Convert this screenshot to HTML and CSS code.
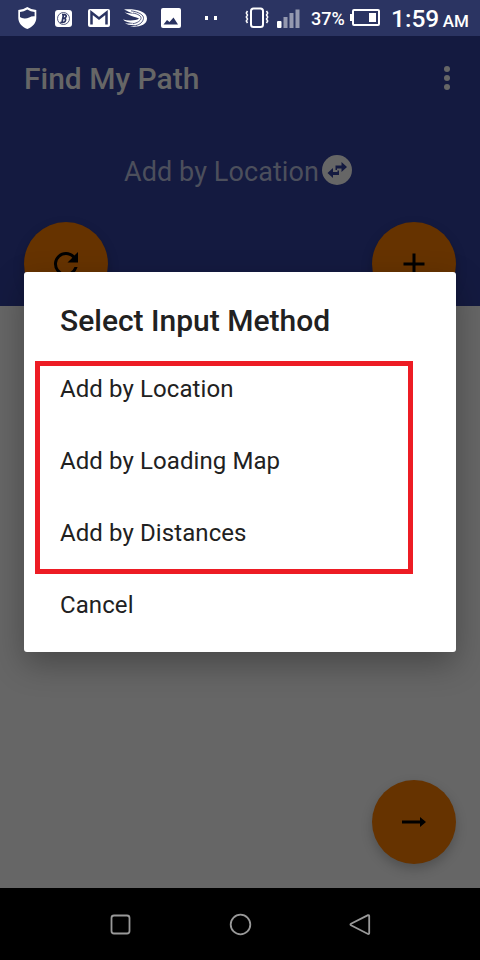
FILE: index.html
```html
<!DOCTYPE html>
<html lang="en">
<head>
<meta charset="utf-8">
<title>Find My Path</title>
<link rel="stylesheet" href="styles.css">
</head>
<body>
<div class="screen">
  <header class="status">
    <svg class="status-icons" width="240" height="36" viewBox="0 0 240 36">
      <path fill="#fff" d="M27.300 7q4 2.800 9 3v8c0 5-4 9-9 11-5-2-9-6-9-11v-8q5-.2 9-3z"/>
      <path fill="#2b3462" d="M20 12q4-.4 7.300-2.600 3.300 2.200 7.300 2.600v4.200c-4-.5-6.500 2.400-10 2.200-2 0-3.400-.7-4.600-1.400z"/>
      <rect x="55" y="10" width="17" height="17" rx="3" fill="#fff"/>
      <circle cx="63.500" cy="18.500" r="6" fill="none" stroke="#2b3462" stroke-width=".8"/>
      <path d="M62 14.700h2.500c2.700 0 2 3.500-.5 3.600 2.800 0 1.700 4.200-1.200 4.200h-2.600M63.500 14.700l-1.500 7.800M62.700 18.300h1.300" fill="none" stroke="#2b3462" stroke-width="1.700"/>
      <rect x="88" y="9" width="22" height="18" rx="2" fill="#fff"/>
      <path d="M91.500 24.500V12.500l7.500 6 7.500-6v12" fill="none" stroke="#2b3462" stroke-width="2.500"/>
      <path fill="#fff" d="M124 9.500C132 8.500 147 10 147 18.500 147 25 139 27.500 130 26.500 134 26.300 136 25.500 137 25 132 25.500 127 24.800 125 23.200 129 23.800 132 23.500 134 23 129 23 125 21.500 123 19.500 129 21 136 20.500 139 18.700 138 17 131 17 124.500 12.200 129 13.500 132 13.700 134 13.500 130 12.500 127 11 124 9.500z"/>
      <path d="M131 10.800C139 12 144 15 143.500 18.500 143 22 140 24.500 136 25.500M133 13C138 14 141.500 16 141 18.500 140.500 21 137 23 133 23.700" fill="none" stroke="#2b3462" stroke-width=".8"/>
      <rect x="161" y="8" width="20" height="20" rx="2" fill="#fff"/>
      <path fill="#2b3462" d="M163.500 24.500l3.500-4.500 2.500 2 4-4.500 4.500 7z"/>
      <path fill="#fff" d="M205 16h3v4h-3zM214 16h3v4h-3z"/>
    </svg>
    <svg class="status-icons" width="67" height="36" viewBox="240 0 67 36">
      <rect x="251" y="8.500" width="12" height="18.500" rx="2.500" fill="none" stroke="#fff" stroke-width="2"/>
      <path d="M247.500 11l-1.200 2 1.200 2-1.200 2 1.200 2-1.200 2 1.200 2M266.500 11l1.200 2-1.200 2 1.200 2-1.200 2 1.200 2-1.200 2" fill="none" stroke="#fff" stroke-width="1.500"/>
      <rect x="277" y="21" width="4.500" height="7" rx="1" fill="#fff"/>
      <path fill="#9599b0" d="M283.500 17h4v11h-4zM289.500 13h4v15h-4zM295.500 9.500h4V28h-4z"/>
    </svg>
    <span class="percent">37%</span>
    <svg class="battery" width="32" height="36" viewBox="349 0 32 36">
      <rect x="353" y="10" width="26" height="15" rx="1" fill="none" stroke="#fff" stroke-width="2"/>
      <path fill="#fff" d="M350 14h3v7h-3zM369 13h7v9h-7z"/>
    </svg>
    <div class="clock"><span>1:59</span><small>AM</small></div>
  </header>
  <main class="app">
    <section class="hero">
      <div class="toolbar">
        <h1>Find My Path</h1>
        <svg width="6" height="24" viewBox="0 0 6 24" fill="#666"><circle cx="3" cy="3" r="3"/><circle cx="3" cy="12" r="3"/><circle cx="3" cy="21" r="3"/></svg>
      </div>
      <div class="mode">
        <span>Add by Location</span>
        <svg width="30" height="30" viewBox="0 0 30 30"><circle cx="15" cy="15" r="15" fill="#666"/><path fill="#141a40" d="M13.500 10.500h6V7l5.500 5-5.500 5v-3.500h-4.500v1.500h-1.500z"/><path fill="#141a40" d="M17 20h-6v3l-5.500-5 5.500-5v4h4.500v-1.500H17z"/></svg>
      </div>
      <div class="actions">
        <div class="fab"><svg width="36" height="36" viewBox="0 0 24 24"><path d="M17.650 6.350A7.950 7.950 0 0 0 12 4a8 8 0 1 0 7.730 10h-2.080A6 6 0 1 1 12 6c1.660 0 3.140.69 4.220 1.780L13 11h7V4z"/></svg></div>
        <div class="fab"><svg width="36" height="36" viewBox="0 0 36 36"><path d="M16.500 7.500h3v9h9v3h-9v9h-3v-9h-9v-3h9z"/></svg></div>
      </div>
    </section>
    <div class="fab next"><svg width="36" height="36" viewBox="0 0 36 36"><path d="M6 16.500h18V13l6 5-6 5v-3.500H6z"/></svg></div>
  </main>
  <nav class="navbar">
    <svg width="24" height="24" viewBox="0 0 24 24"><rect x="3.500" y="3.500" width="18" height="18" rx="2.500"/></svg>
    <svg width="24" height="24" viewBox="0 0 24 24"><circle cx="12.500" cy="12.500" r="9.800"/></svg>
    <svg width="24" height="24" viewBox="0 0 24 24"><path d="M20 3.100 3 11.700q-1.200.8 0 1.600l17 8.700q1.200.3 1.200-1V4.100q0-1.300-1.200-1z"/></svg>
  </nav>
  <div class="dialog">
    <h2>Select Input Method</h2>
    <ul>
      <li>Add by Location</li>
      <li>Add by Loading Map</li>
      <li>Add by Distances</li>
      <li>Cancel</li>
    </ul>
    <div class="highlight"></div>
  </div>
</div>
</body>
</html>
```
FILE: styles.css
```css
* { box-sizing: border-box; }
body { margin: 0; font-family: Roboto, sans-serif; }
h1, h2, ul { margin: 0; padding: 0; }
svg { display: block; flex: none; }
.screen { position: relative; width: 480px; height: 960px; display: flex; flex-direction: column; overflow: hidden; background: #666; }
.status { height: 36px; background: #2b3462; color: #fff; display: flex; align-items: center; white-space: nowrap; }
.percent { width: 38px; margin-left: 4px; font-size: 18px; font-weight: 500; padding-top: 1px; }
.clock { display: flex; align-items: baseline; gap: 3.5px; margin-left: 10px; font-size: 24.500px; font-weight: 500; }
.clock small { font-size: 17px; }
.app { flex: 1; display: flex; flex-direction: column; }
.hero { height: 270px; background: #141a40; display: flex; flex-direction: column; }
.toolbar { height: 84px; padding: 0 30px 0 24px; display: flex; align-items: center; justify-content: space-between; }
.toolbar h1 { color: #666; font-size: 30px; font-weight: 500; line-height: 36px; padding-top: 2px; }
.mode { height: 102px; display: flex; justify-content: center; align-items: center; gap: 3px; padding: 0 4px 2px 0; color: #4c4f5c; font-size: 27px; letter-spacing: .08px; }
.mode span { padding-top: 4px; }
.actions { display: flex; justify-content: space-between; padding: 0 24px; }
.fab { width: 84px; height: 84px; border-radius: 50%; background: #663300; display: flex; align-items: center; justify-content: center; box-shadow: 0 5px 12px rgba(0,0,0,.22); }
.next { margin: auto 24px 24px auto; }
.navbar { height: 72px; background: #000; display: flex; align-items: center; justify-content: center; gap: 96px; }
.navbar svg { fill: none; stroke: #999; stroke-width: 1.8; }
.dialog { position: absolute; left: 24px; top: 272px; width: 432px; height: 380px; padding: 30px 36px 0; border-radius: 3px; background: #fff; color: #212121; box-shadow: 0 12px 32px rgba(0,0,0,.3); }
.dialog h2 { font-size: 30px; line-height: 38px; font-weight: 500; margin-bottom: 13px; }
.dialog ul { list-style: none; }
.dialog li { height: 72px; line-height: 72px; font-size: 24px; letter-spacing: .09px; }
.highlight { position: absolute; left: 11px; top: 89px; width: 378px; height: 213px; border: 5px solid #ed1c24; }
```
